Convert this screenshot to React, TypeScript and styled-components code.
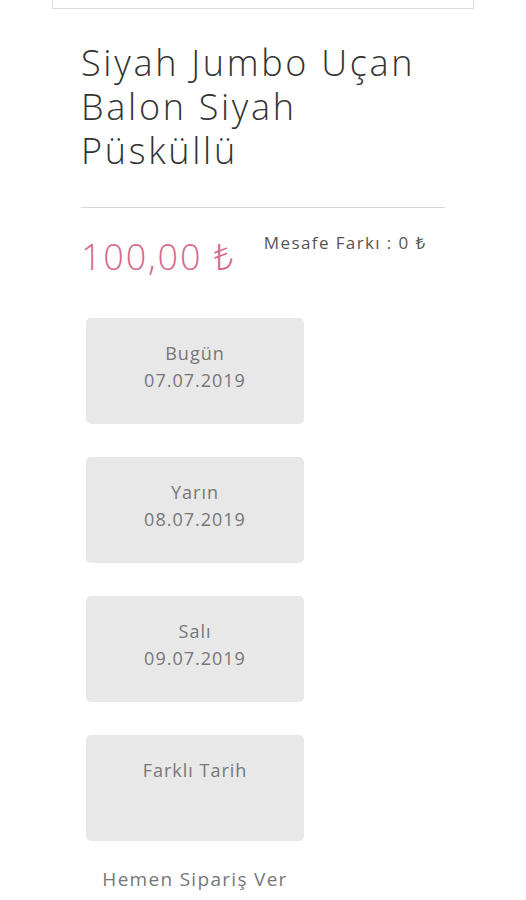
import React from 'react';
import styled, { createGlobalStyle } from 'styled-components';

const GlobalStyle = createGlobalStyle`
  html, body {
    margin: 0;
    padding: 0;
    background: #ffffff;
  }
  body {
    font-family: 'Open Sans', 'Noto Sans', 'Liberation Sans', sans-serif;
    font-weight: 300;
  }
`;

const Page = styled.div`
  width: 526px;
  min-height: 900px;
  display: flex;
  flex-direction: column;
`;

const TopBox = styled.div`
  margin: 0 52px;
  height: 8px;
  border: 1px solid #dcdcdc;
  border-top: none;
`;

const Title = styled.h1`
  margin: 32px 81px 0 81px;
  font-size: 36px;
  line-height: 44px;
  font-weight: 300;
  color: #333;
  letter-spacing: 2.7px;
`;

const Divider = styled.hr`
  margin: 34px 81px 0 81px;
  width: 364px;
  border: none;
  border-top: 1px solid #d6d6d6;
`;

const PriceRow = styled.div`
  display: flex;
  align-items: flex-start;
  margin: 27px 0 0 81px;
  gap: 28px;
`;

const Price = styled.div`
  font-size: 36px;
  line-height: 44px;
  color: #d5698e;
  font-weight: 300;
  letter-spacing: 1.8px;
`;

const Distance = styled.div`
  font-size: 17px;
  line-height: 20px;
  margin-top: -2px;
  color: #555;
  font-weight: 400;
  letter-spacing: 1.4px;
`;

const DayList = styled.div`
  display: flex;
  flex-direction: column;
  gap: 33px;
  margin: 39px 0 0 86px;
  width: 218px;
`;

const DayButton = styled.button`
  width: 218px;
  height: 106px;
  border: none;
  border-radius: 5px;
  background: #e8e8e8;
  display: flex;
  flex-direction: column;
  align-items: center;
  justify-content: flex-start;
  padding: 22px 0 0 0;
  font-family: inherit;
  font-size: 18px;
  line-height: 27px;
  font-weight: 400;
  letter-spacing: 1px;
  color: #777;
  cursor: pointer;
`;

const OrderNow = styled.div`
  width: 218px;
  margin: 26px 0 0 86px;
  text-align: center;
  font-size: 19px;
  line-height: 24px;
  font-weight: 400;
  letter-spacing: 1.3px;
  color: #777;
`;

const days = [
  { label: 'Bugün', date: '07.07.2019' },
  { label: 'Yarın', date: '08.07.2019' },
  { label: 'Salı', date: '09.07.2019' },
  { label: 'Farklı Tarih', date: '' },
];

const App: React.FC = () => {
  return (
    <>
      <GlobalStyle />
      <Page>
        <TopBox />
        <Title>Siyah Jumbo Uçan Balon Siyah Püsküllü</Title>
        <Divider />
        <PriceRow>
          <Price>100,00 ₺</Price>
          <Distance>Mesafe Farkı : 0 ₺</Distance>
        </PriceRow>
        <DayList>
          {days.map((d) => (
            <DayButton key={d.label}>
              <span>{d.label}</span>
              {d.date && <span>{d.date}</span>}
            </DayButton>
          ))}
        </DayList>
        <OrderNow>Hemen Sipariş Ver</OrderNow>
      </Page>
    </>
  );
};

export default App;
